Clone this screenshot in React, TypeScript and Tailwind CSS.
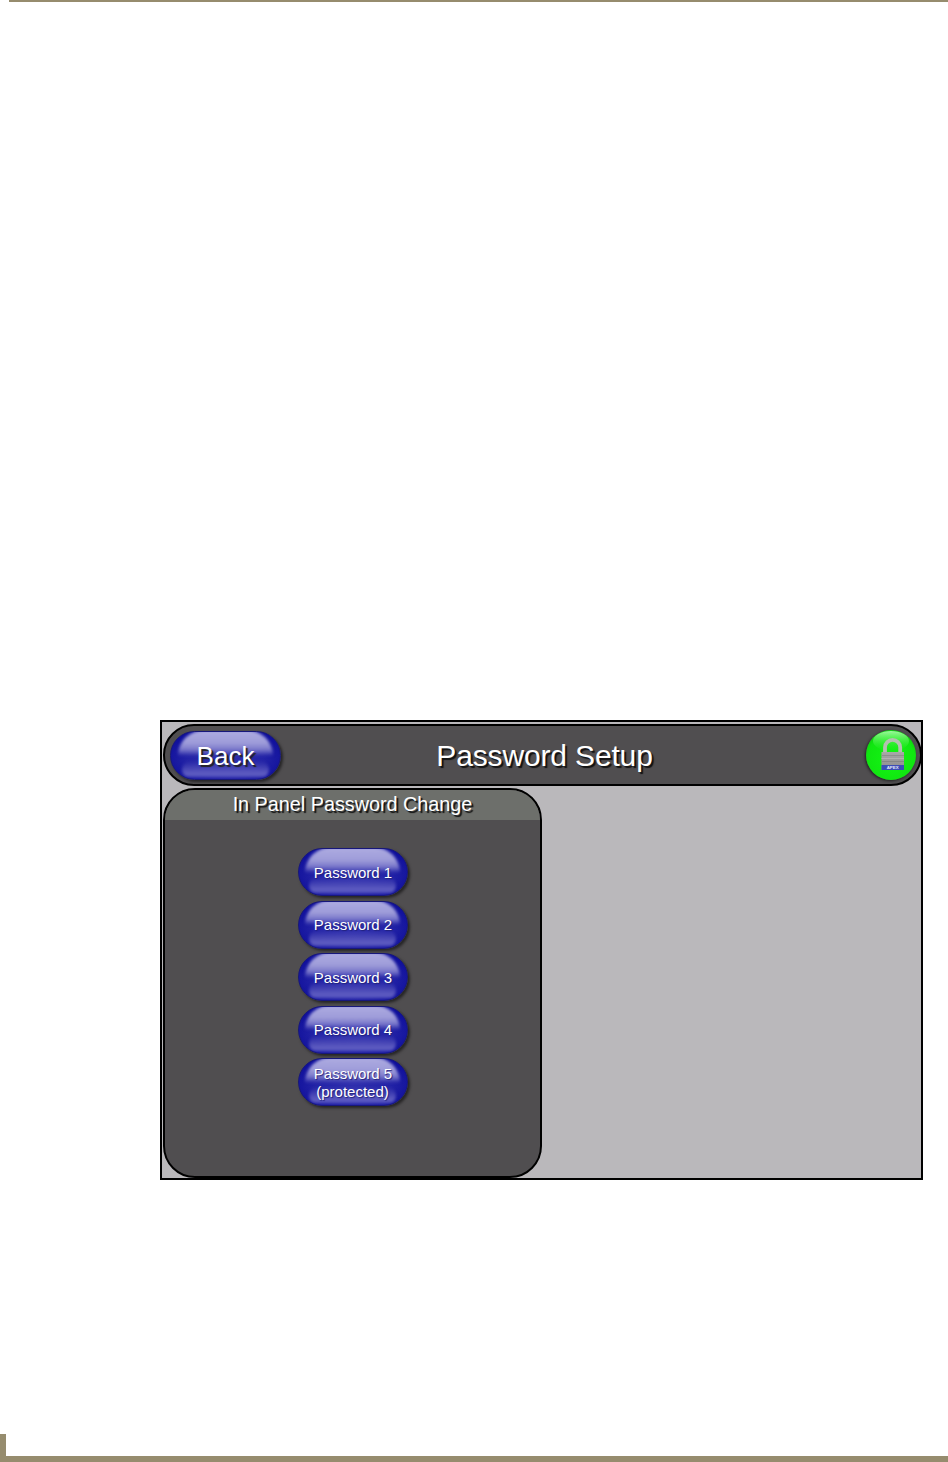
import React from 'react';

const passwords = ['Password 1', 'Password 2', 'Password 3', 'Password 4'];

function GlossButton({ className, children }: { className: string; children: React.ReactNode }) {
  return (
    <div
      className={`relative overflow-hidden rounded-full border border-[#17177a] bg-[radial-gradient(ellipse_at_50%_55%,#3030ae_0%,#2323a6_50%,#0c0c9a_85%,#08088c_100%)] flex flex-col items-center justify-center text-white ${className}`}
    >
      {/* top highlight */}
      <div className="absolute left-[6%] right-[6%] -top-[2px] h-[56%] rounded-b-[70%] rounded-t-full blur-[1.5px] bg-[linear-gradient(180deg,#aeacE1_0%,#9e9cd9_50%,#7a78ca_75%,rgba(60,60,180,0)_100%)]" />
      {/* bottom glow */}
      <div className="absolute left-[10%] right-[10%] bottom-[1px] h-[36%] rounded-full blur-[1.5px] bg-[linear-gradient(180deg,rgba(90,88,190,0)_0%,#5856bd_65%,#605ec2_85%,rgba(40,40,170,0.5)_100%)]" />
      <div className="relative flex flex-col items-center">{children}</div>
    </div>
  );
}

function LockButton() {
  return (
    <div className="w-[50px] h-[50px] rounded-full shadow-[-1px_1px_3px_rgba(0,0,0,0.6)] bg-[radial-gradient(circle_at_50%_58%,#14f514_0%,#10e610_62%,#0cc00c_84%,#078007_100%)]">
      <svg viewBox="0 0 50 50" className="w-[50px] h-[50px]">
        <defs>
          <linearGradient id="lock-body" x1="0" y1="0" x2="0" y2="1">
            <stop offset="0" stopColor="#a8a8a8" />
            <stop offset="1" stopColor="#8c8c8c" />
          </linearGradient>
          <linearGradient id="lock-glare" x1="0" y1="0" x2="0" y2="1">
            <stop offset="0" stopColor="#b6ffb6" stopOpacity="0.85" />
            <stop offset="1" stopColor="#3cf03c" stopOpacity="0" />
          </linearGradient>
        </defs>
        <ellipse cx="25" cy="11" rx="18" ry="10" fill="url(#lock-glare)" />
        <path d="M19 23V17.5a7.6 7.6 0 0 1 15.2 0V23" fill="none" stroke="#b4c0b0" strokeWidth="3.8" />
        <rect x="15.5" y="22" width="22.5" height="18" fill="url(#lock-body)" />
        <rect x="15.5" y="25" width="22.5" height="1" fill="#8e8e8e" />
        <rect x="15.5" y="28" width="22.5" height="1" fill="#b2b2b2" />
        <rect x="15.5" y="31" width="22.5" height="1" fill="#868686" />
        <rect x="15.5" y="35" width="22.5" height="5" fill="#3c4eb6" />
        <text x="26.7" y="39.2" textAnchor="middle" fontSize="4.4" fontWeight="700" fill="#e4e8f8" fontFamily="Liberation Sans, sans-serif">
          APEX
        </text>
      </svg>
    </div>
  );
}

export default function App() {
  return (
    <div className="min-h-[1462px] flex flex-col bg-white font-['Liberation_Sans',Arial,sans-serif]">
      {/* top rule */}
      <div className="ml-[9px] h-[2px] bg-[#968c6e]" />

      {/* panel */}
      <div className="mt-[718px] ml-[160px] w-[763px] h-[460px] border-2 border-black bg-[#bab8bb] pt-[2px] pl-[1px]">
        {/* title bar */}
        <div className="h-[62px] w-[759px] rounded-full border-2 border-black bg-[#504e50] grid grid-cols-[1fr_auto_1fr] items-center pl-[5px] pr-[4px]">
          <GlossButton className="justify-self-start w-[111px] h-[49px] shadow-[2px_2px_3px_rgba(0,0,0,0.55)]">
            <span className="text-[26px] pt-[2px] [text-shadow:2px_2px_1px_#222]">Back</span>
          </GlossButton>
          <div className="ml-[3px] text-[30px] tracking-[-0.15px] font-normal text-white [text-shadow:2px_2px_1px_#111]">
            Password Setup
          </div>
          <div className="justify-self-end">
            <LockButton />
          </div>
        </div>

        {/* password list */}
        <div className="mt-[2px] w-[379px] h-[390px] rounded-[32px] border-2 border-black bg-[#504e50] overflow-hidden">
          <div className="h-[30px] bg-[#6d6f6b] text-center text-[19.8px] leading-[28px] text-white [text-shadow:2px_2px_1px_#111]">
            In Panel Password Change
          </div>
          <div className="pt-[28px] flex flex-col items-center gap-[4.5px]">
            {passwords.map((p) => (
              <GlossButton key={p} className="w-[110px] h-[48px] shadow-[2px_2px_3px_rgba(0,0,0,0.55)]">
                <span className="ml-[1px] text-[15px] pt-[2px] [text-shadow:1px_1px_1px_#22227a]">{p}</span>
              </GlossButton>
            ))}
            <GlossButton className="w-[110px] h-[48px] shadow-[2px_2px_3px_rgba(0,0,0,0.55)]">
              <span className="ml-[1px] text-[15px] leading-[18px] pt-[2px] [text-shadow:1px_1px_1px_#22227a]">Password 5</span>
              <span className="text-[15px] leading-[18px] [text-shadow:1px_1px_1px_#22227a]">(protected)</span>
            </GlossButton>
          </div>
        </div>
      </div>

      {/* footer rule */}
      <div className="mt-auto">
        <div className="w-[6px] h-[22px] bg-[#968c6e]" />
        <div className="h-[6px] bg-[#968c6e]" />
      </div>
    </div>
  );
}
